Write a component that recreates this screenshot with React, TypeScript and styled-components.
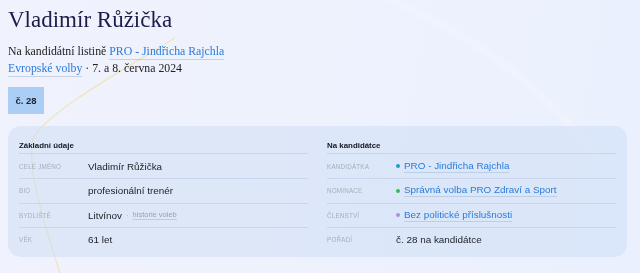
import React from 'react';
import styled, { createGlobalStyle } from 'styled-components';

const Global = createGlobalStyle`
  html, body { margin: 0; padding: 0; }
  body {
    background: linear-gradient(100deg, #f0f2fc 0%, #eef2fd 50%, #eaf0fd 100%);
    font-family: 'Liberation Sans', Arial, sans-serif;
    min-height: 273px;
    overflow: hidden;
  }
`;

const Backdrop = styled.svg`
  position: fixed;
  inset: 0;
  width: 640px;
  height: 273px;
  pointer-events: none;
  z-index: 0;
`;

const Page = styled.main`
  position: relative;
  z-index: 1;
  padding: 6px 13px 0 8px;
`;

const Title = styled.h1`
  margin: 0;
  font-family: 'Liberation Serif', 'Times New Roman', serif;
  font-weight: 400;
  font-size: 23px;
  line-height: 27px;
  color: #1b1d4a;
`;

const Lead = styled.p`
  margin: 10px 0 0;
  font-family: 'Liberation Serif', 'Times New Roman', serif;
  font-size: 11.8px;
  line-height: 17px;
  color: #222;
`;

const SerifLink = styled.a`
  color: #2a7bd8;
  text-decoration: none;
  border-bottom: 1px solid rgba(120, 150, 190, 0.35);
  padding-bottom: 1px;
`;

const Badge = styled.div`
  margin-top: 10.4px;
  width: 36px;
  height: 27px;
  display: grid;
  place-items: center;
  background: #abcef4;
  color: #1c2233;
  font-size: 9.5px;
  font-weight: 700;
`;

const Card = styled.section`
  margin-top: 12px;
  display: grid;
  grid-template-columns: 1fr 1fr;
  gap: 19px;
  padding: 14px 11px 5.6px;
  border-radius: 13px;
  background: rgba(200, 218, 244, 0.45);
`;

const Column = styled.div`
  display: flex;
  flex-direction: column;
`;

const Heading = styled.h2`
  margin: 0;
  font-size: 7.9px;
  line-height: 12px;
  font-weight: 700;
  color: #141821;
  padding-bottom: 1px;
  border-bottom: 1px solid rgba(150, 170, 205, 0.28);
`;

const Row = styled.div`
  display: grid;
  grid-template-columns: 69px 1fr;
  align-items: center;
  min-height: 23.6px;
  border-bottom: 1px solid rgba(150, 170, 205, 0.28);

  &:last-child { border-bottom: none; }
`;

const Label = styled.span`
  font-size: 6.3px;
  letter-spacing: 0.03em;
  text-transform: uppercase;
  color: #a7adba;
`;

const Value = styled.span`
  font-size: 9.9px;
  color: #20232b;
  display: flex;
  align-items: center;
`;

const Dot = styled.i<{ $color: string }>`
  width: 4px;
  height: 4px;
  border-radius: 50%;
  background: ${p => p.$color};
  margin-right: 4px;
  flex: none;
`;

const CardLink = styled.a`
  color: #2a7bd8;
  text-decoration: none;
  border-bottom: 1px solid rgba(120, 150, 190, 0.3);
  padding-bottom: 1px;
`;

const Sep = styled.span`
  color: #b5bac4;
  font-size: 7.5px;
  margin: 0 4px;
`;

const Muted = styled.a`
  color: #9aa1ad;
  font-size: 7.5px;
  text-decoration: none;
  border-bottom: 1px solid rgba(150, 160, 180, 0.4);
`;

export default function App() {
  return (
    <>
      <Global />
      <Backdrop viewBox="0 0 640 273">
        <path
          d="M 380 -5 C 460 30, 530 70, 600 160"
          stroke="#ffffff"
          strokeOpacity="0.15"
          strokeWidth="8"
          fill="none"
        />
        <path
          d="M 175 38 C 120 72, 50 110, 33 138 C 26 170, 45 225, 62 280"
          stroke="#f0e2b0"
          strokeOpacity="0.85"
          strokeWidth="1.2"
          fill="none"
        />
      </Backdrop>
      <Page>
        <Title>Vladimír Růžička</Title>
        <Lead>
          Na kandidátní listině <SerifLink href="#">PRO - Jindřicha Rajchla</SerifLink>
          <br />
          <SerifLink href="#">Evropské volby</SerifLink> · 7. a 8. června 2024
        </Lead>
        <Badge>č. 28</Badge>
        <Card>
          <Column>
            <Heading>Základní údaje</Heading>
            <Row>
              <Label>Celé jméno</Label>
              <Value>Vladimír Růžička</Value>
            </Row>
            <Row>
              <Label>Bio</Label>
              <Value>profesionální trenér</Value>
            </Row>
            <Row>
              <Label>Bydliště</Label>
              <Value>
                Litvínov<Sep>·</Sep><Muted href="#">historie voleb</Muted>
              </Value>
            </Row>
            <Row>
              <Label>Věk</Label>
              <Value>61 let</Value>
            </Row>
          </Column>
          <Column>
            <Heading>Na kandidátce</Heading>
            <Row>
              <Label>Kandidátka</Label>
              <Value>
                <Dot $color="#1a9fc8" />
                <CardLink href="#">PRO - Jindřicha Rajchla</CardLink>
              </Value>
            </Row>
            <Row>
              <Label>Nominace</Label>
              <Value>
                <Dot $color="#2fc04c" />
                <CardLink href="#">Správná volba PRO Zdraví a Sport</CardLink>
              </Value>
            </Row>
            <Row>
              <Label>Členství</Label>
              <Value>
                <Dot $color="#a991df" />
                <CardLink href="#">Bez politické příslušnosti</CardLink>
              </Value>
            </Row>
            <Row>
              <Label>Pořadí</Label>
              <Value>č. 28 na kandidátce</Value>
            </Row>
          </Column>
        </Card>
      </Page>
    </>
  );
}
